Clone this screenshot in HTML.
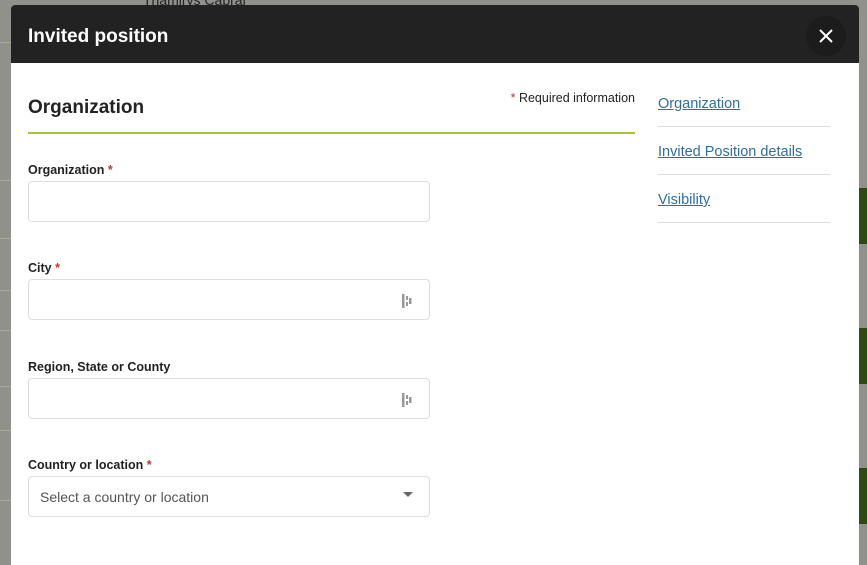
<!DOCTYPE html>
<html><head><style>
*{box-sizing:border-box;margin:0;padding:0}
body{width:867px;height:546px;overflow:hidden;background:#8f918a;font-family:"Liberation Sans",sans-serif;position:relative}
.bgline{position:absolute;left:0;width:11px;height:1px;background:#a9ab97}
.modal{position:absolute;left:11px;top:5px;width:848px;height:560px;background:#fff;border-radius:4px 4px 0 0;overflow:hidden}
.hdr{height:58px;background:#222;color:#fff;font-weight:bold;font-size:19px;padding:21px 0 0 17px}
.close{position:absolute;left:795px;top:11px;width:40px;height:40px;border-radius:50%;background:#1c1c1c}
.main{position:absolute;left:17px;top:58px;width:607px}
h2{position:absolute;top:34px;font-size:19px;color:#222;font-weight:bold}
.req{position:absolute;right:0;top:28px;font-size:12.5px;color:#222}
.red{color:#c0392b}
.rule{position:absolute;top:69px;left:0;width:607px;height:2px;background:#a4c639}
.lbl{position:absolute;font-size:12.5px;font-weight:bold;color:#222}
.inp{position:absolute;left:0;width:402px;height:41px;border:1px solid #ddd;border-radius:4px}
.nav{position:absolute;left:647px;top:74px;width:172px}
.nav a{display:block;color:#2f6f9a;font-size:14.5px;text-decoration:underline;height:48px;padding-top:17px;border-bottom:1px solid #ddd}
.ic{position:absolute;right:16px;top:14px}
</style></head><body>
<div class="bgline" style="top:42px"></div><div class="bgline" style="top:180px"></div><div class="bgline" style="top:238px"></div><div class="bgline" style="top:290px"></div><div class="bgline" style="top:330px"></div><div class="bgline" style="top:386px"></div><div class="bgline" style="top:430px"></div><div class="bgline" style="top:500px"></div>
<div style="position:absolute;left:143px;top:-8px;font-size:14px;color:#222">Thamirys Cabral</div>
<div style="position:absolute;left:859px;top:188px;width:8px;height:56px;background:#2f4a10"></div>
<div style="position:absolute;left:859px;top:328px;width:8px;height:56px;background:#2f4a10"></div>
<div style="position:absolute;left:859px;top:468px;width:8px;height:56px;background:#2f4a10"></div>
<div class="modal">
<div class="hdr">Invited position</div>
<div class="close"><svg width="40" height="40"><path d="M14 14L26 26M26 14L14 26" stroke="#fff" stroke-width="2"/></svg></div>
<div class="main">
<h2>Organization</h2>
<div class="req"><span class="red">*</span> Required information</div>
<div class="rule"></div>
<div class="lbl" style="top:100px">Organization <span class="red">*</span></div>
<div class="inp" style="top:118px"></div>
<div class="lbl" style="top:198px">City <span class="red">*</span></div>
<div class="inp" style="top:216px"><svg class="ic" width="12" height="14"><rect x="1" y="0" width="2.5" height="14" fill="#999"/><rect x="5" y="2" width="2" height="4" fill="#999"/><rect x="5" y="8" width="2" height="4" fill="#999"/><rect x="8" y="4" width="2.5" height="6" fill="#999"/></svg></div>
<div class="lbl" style="top:297px">Region, State or County</div>
<div class="inp" style="top:315px"><svg class="ic" width="12" height="14"><rect x="1" y="0" width="2.5" height="14" fill="#999"/><rect x="5" y="2" width="2" height="4" fill="#999"/><rect x="5" y="8" width="2" height="4" fill="#999"/><rect x="8" y="4" width="2.5" height="6" fill="#999"/></svg></div>
<div class="lbl" style="top:395px">Country or location <span class="red">*</span></div>
<div class="inp" style="top:413px;font-size:14px;color:#555;padding:12px 0 0 11px">Select a country or location<svg style="position:absolute;right:16px;top:15px" width="10" height="6"><path d="M0 0H10L5 5Z" fill="#666"/></svg></div>
</div>
<div class="nav"><a>Organization</a><a>Invited Position details</a><a>Visibility</a></div>
</div>
</body></html>
